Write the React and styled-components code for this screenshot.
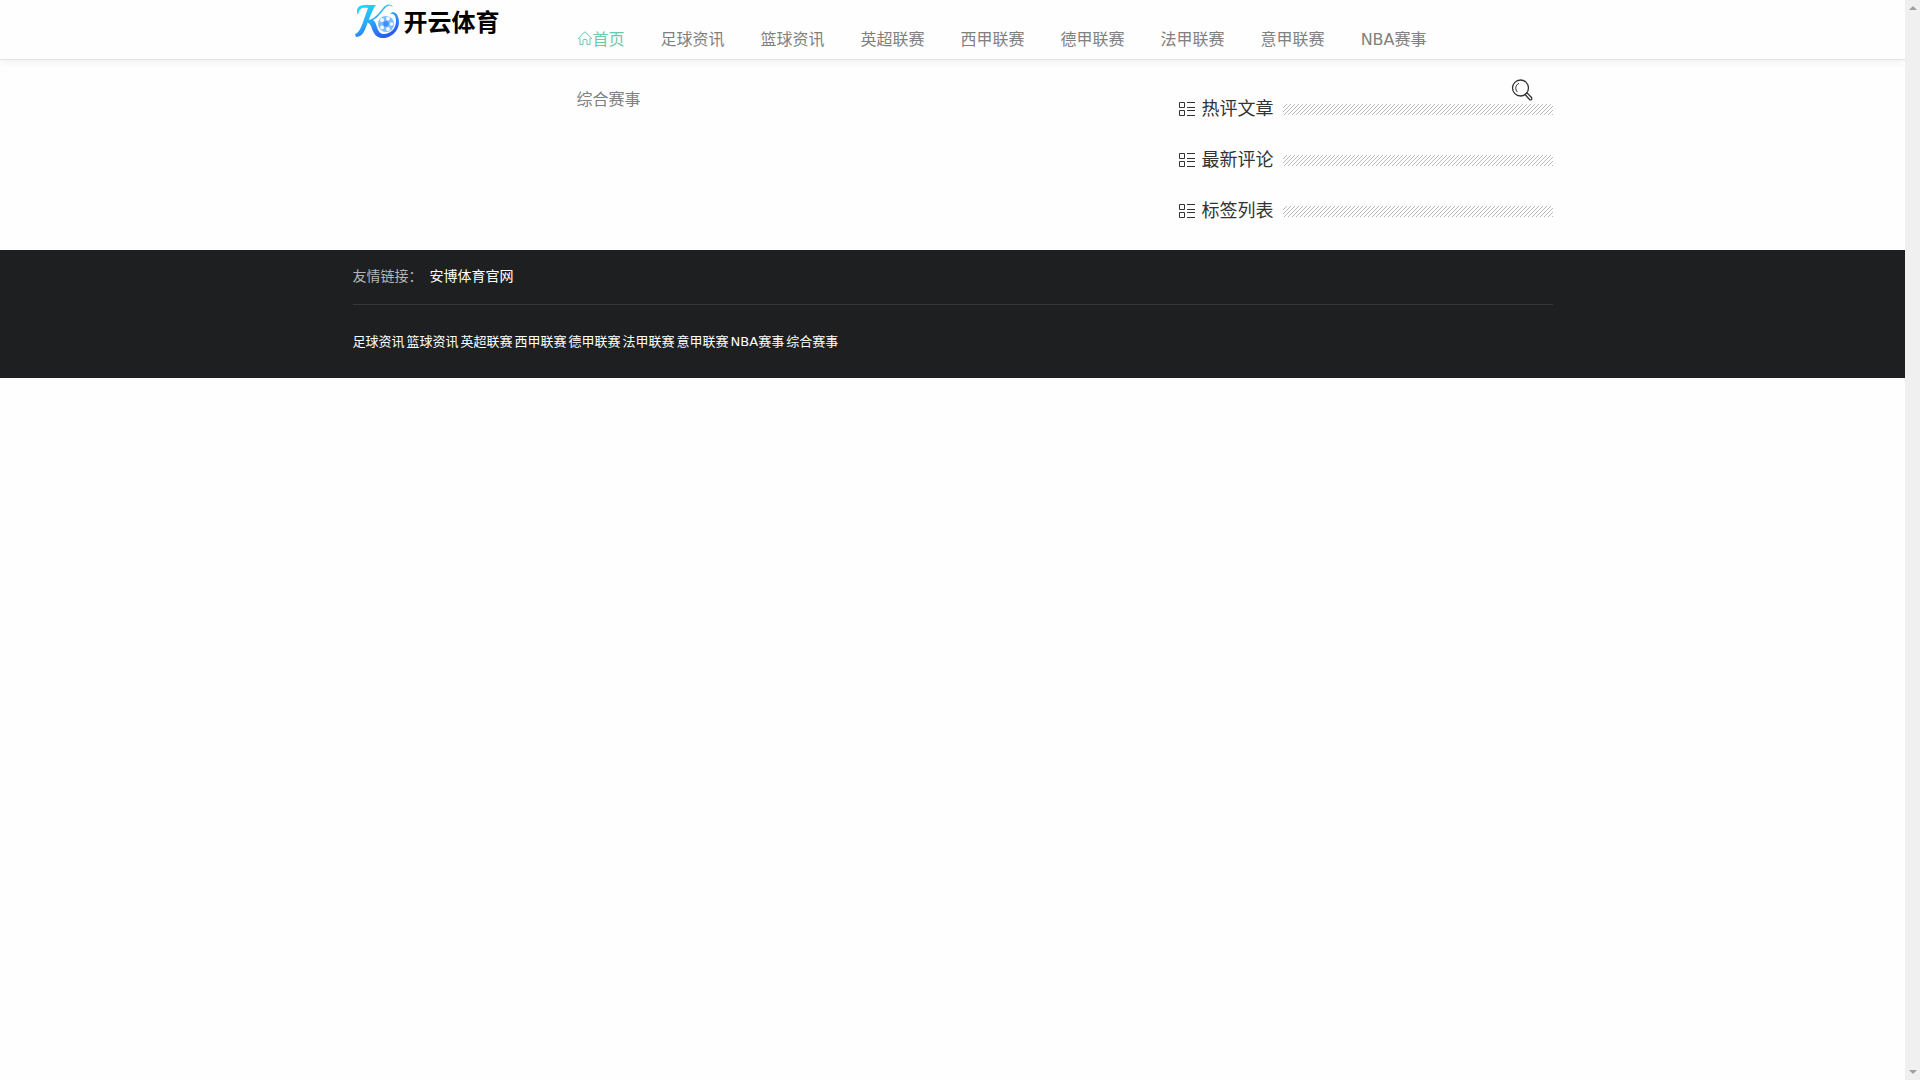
import React from "react";
import styled, { createGlobalStyle } from "styled-components";

const GlobalStyle = createGlobalStyle`
    * {
        box-sizing: border-box;
    }
    body {
        margin: 0;
        background: #fefefe;
        color: #333;
        font-family: "DejaVu Sans", "Noto Sans CJK SC", sans-serif;
        font-size: 14px;
    }
    a {
        color: inherit;
        text-decoration: none;
    }
`;

const Page = styled.div`
    display: flex;
    min-height: 100vh;
`;

const Content = styled.div`
    flex: 1;
    min-width: 0;
`;

const Container = styled.div`
    display: flex;
    flex-direction: ${(props) => props.$direction || "row"};
    max-width: 1200px;
    margin: 0 auto;
`;

const Header = styled.header`
    height: 60px;
    border-bottom: 1px solid #e4e4e4;
    box-shadow: 0 2px 8px rgba(0, 0, 0, 0.06);
`;

const LogoLink = styled.a`
    flex: 0 0 206px;
    display: flex;
    align-items: center;
    height: 40px;
    color: #000;
    font-size: 24px;
    font-weight: bold;

    svg {
        width: 48px;
        height: 38px;
        margin: 2px 1px 0 2px;
    }
`;

const NavBar = styled.nav`
    flex: 1;
    min-width: 0;
    padding: 8px 20px 0 0;
`;

const NavList = styled.ul`
    display: flex;
    flex-wrap: wrap;
    margin: 0;
    padding: 0;
    list-style: none;
`;

const SearchItem = styled.li`
    display: flex;
    align-items: center;
    height: 44px;
    margin-left: auto;
`;

const NavLink = styled.a`
    display: flex;
    align-items: center;
    height: 60px;
    padding: 0 18px;
    color: ${(props) => (props.$active ? "#6cc9a8" : "#808080")};
    font-size: 16px;
`;

const SearchButton = styled.button`
    display: flex;
    padding: 0;
    border: 0;
    background: none;
    color: #333;
    cursor: pointer;
`;

const Main = styled.main`
    display: flex;
    justify-content: flex-end;
    max-width: 1200px;
    min-height: 190px;
    margin: 0 auto;
    padding-top: 32px;
`;

const Sidebar = styled.aside`
    display: flex;
    flex-direction: column;
    gap: 19px;
    width: 375px;
`;

const WidgetTitle = styled.h3`
    display: flex;
    align-items: center;
    height: 32px;
    margin: 0;
    padding-bottom: 2px;
    color: #333;
    font-size: 18px;
    font-weight: normal;

    svg {
        margin: 4px 6px 0 0;
    }
`;

const Stripes = styled.span`
    flex: 1;
    height: 11px;
    margin: 4px 0 0 9px;
    background: linear-gradient(135deg, transparent 45%, #bbb 45% 55%, transparent 55%) 0 0 / 4px 4px;
`;

const Footer = styled.footer`
    height: 128px;
    background: #1e1f21;
    color: #fff;
`;

const FriendLinks = styled.div`
    display: flex;
    align-items: center;
    gap: 7px;
    height: 55px;
    padding-bottom: 4px;
    border-bottom: 1px solid #37383a;
`;

const FriendLabel = styled.span`
    color: #b4b5ba;
`;

const FooterLinks = styled.div`
    display: flex;
    align-items: center;
    gap: 2px;
    height: 73px;
    padding-bottom: 2px;
    font-size: 13px;
`;

const ScrollTrack = styled.div`
    display: flex;
    flex-direction: column;
    justify-content: space-between;
    align-items: center;
    width: 15px;
    padding: 6px 0;
    background: #f0f0f0;
`;

const Arrow = styled.span`
    border: 4px solid transparent;
    border-top: ${(props) => (props.$down ? "4px solid #a0a0a0" : "0")};
    border-bottom: ${(props) => (props.$down ? "0" : "4px solid #a0a0a0")};
`;

const categories = [
    "足球资讯",
    "篮球资讯",
    "英超联赛",
    "西甲联赛",
    "德甲联赛",
    "法甲联赛",
    "意甲联赛",
    "NBA赛事",
    "综合赛事",
];

const widgets = ["热评文章", "最新评论", "标签列表"];

const LogoMark = () => (
    <svg viewBox="0 0 48 38" fill="none" aria-hidden="true">
        <defs>
            <linearGradient id="mark" gradientUnits="userSpaceOnUse" x1="10" y1="2" x2="26" y2="36">
                <stop offset="0" stopColor="#1fdcf5" />
                <stop offset="0.5" stopColor="#2ba6fb" />
                <stop offset="1" stopColor="#2a5cf6" />
            </linearGradient>
        </defs>
        <g fill="url(#mark)">
            <path d="M3 13C0 7 4 3 9 3H21C17 8 14 18 11 25C9 31 6 35 1 35L0 32C6 31 9 16 13 6C8 5 4 6 3 13Z" />
            <path d="M38 5C36 1 31 2 28 6C24 11 20 17 13 18V21C18 22 16 35 27 36C38 37 47 25 43 15C42 10 37 9 35 12C39 11 41 14 41 19C41 27 35 32 29 32C21 32 23 21 18 18C25 15 29 5 33 4C35 3 36 4 38 5Z" />
        </g>
        <circle cx="31" cy="22" r="8" fill="#7dbcff" />
        <g fill="#f2faff">
            <path d="M29 19.5L32 19L34 21.5L32.5 24.5H29.5L28 22Z" fill="#3f8df6" />
            <circle cx="27" cy="18" r="2" />
            <circle cx="33" cy="16.5" r="2" />
            <circle cx="36.5" cy="22" r="1.8" />
            <circle cx="33" cy="27" r="2" />
            <circle cx="27" cy="25.5" r="2" />
        </g>
    </svg>
);

const HomeIcon = () => (
    <svg width="16" height="16" viewBox="0 0 16 16" fill="none" stroke="currentColor" aria-hidden="true">
        <path d="M1 9L7.3 2.2Q8 1.6 8.7 2.2L15 9M3 8V14.5H6V10.5Q6 9.5 7 9.5H9Q10 9.5 10 10.5V14.5H13V8" />
    </svg>
);

const SearchIcon = () => (
    <svg width="22" height="22" viewBox="0 0 22 22" fill="none" stroke="currentColor" aria-hidden="true">
        <circle cx="9.5" cy="9" r="8" strokeWidth="1.3" />
        <path d="M8 4.3C4 6 4 11 6.5 13" />
        <path d="M14 15.5L16 13.8L20.5 18.5C21.5 20 19.8 21.5 18.5 20.5Z" strokeWidth="1.3" />
    </svg>
);

const ListIcon = () => (
    <svg width="18" height="16" viewBox="0 0 18 16" fill="none" stroke="currentColor" aria-hidden="true">
        <path d="M1.5 1.5H6.5V6.5H1.5ZM1.5 9.5H6.5V14.5H1.5ZM9 1.5H17M9 6.5H17M9 9.5H17M9 14.5H17" />
    </svg>
);

export default function App() {
    return (
        <Page>
            <GlobalStyle />
            <Content>
                <Header>
                    <Container>
                        <LogoLink href="#">
                            <LogoMark />
                            开云体育
                        </LogoLink>
                        <NavBar>
                            <NavList>
                                <li>
                                    <NavLink href="#" $active>
                                        <HomeIcon />
                                        首页
                                    </NavLink>
                                </li>
                                {categories.map((name) => (
                                    <li key={name}>
                                        <NavLink href="#">{name}</NavLink>
                                    </li>
                                ))}
                                <SearchItem>
                                    <SearchButton type="button" aria-label="搜索">
                                        <SearchIcon />
                                    </SearchButton>
                                </SearchItem>
                            </NavList>
                        </NavBar>
                    </Container>
                </Header>
                <Main>
                    <Sidebar>
                        {widgets.map((title) => (
                            <WidgetTitle key={title}>
                                <ListIcon />
                                {title}
                                <Stripes />
                            </WidgetTitle>
                        ))}
                    </Sidebar>
                </Main>
                <Footer>
                    <Container $direction="column">
                        <FriendLinks>
                            <FriendLabel>友情链接：</FriendLabel>
                            <a href="#">安博体育官网</a>
                        </FriendLinks>
                        <FooterLinks>
                            {categories.map((name) => (
                                <a href="#" key={name}>
                                    {name}
                                </a>
                            ))}
                        </FooterLinks>
                    </Container>
                </Footer>
            </Content>
            <ScrollTrack>
                <Arrow />
                <Arrow $down />
            </ScrollTrack>
        </Page>
    );
}
